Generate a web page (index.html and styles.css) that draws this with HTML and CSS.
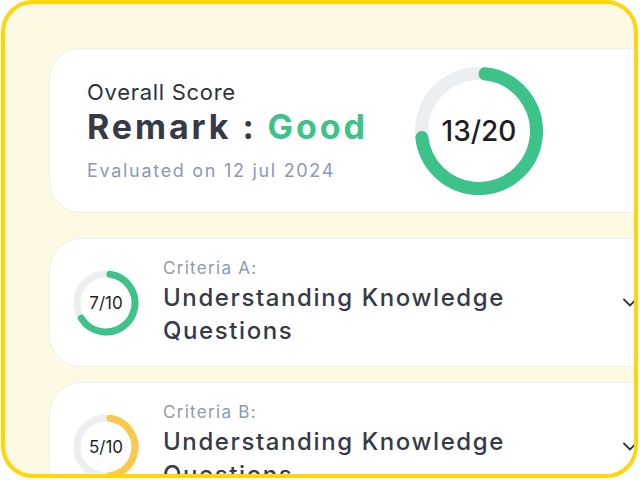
FILE: index.html
```html
<!DOCTYPE html>
<html>
<head>
<meta charset="utf-8">
<link rel="stylesheet" href="styles.css">
</head>
<body>
<div class="frame">
  <section class="card overall">
    <div class="overall-text">
      <div class="overall-label">Overall Score</div>
      <div class="remark">Remark : <span class="good">Good</span></div>
      <div class="evaluated">Evaluated on 12 jul 2024</div>
    </div>
    <div class="ring big-ring">
      <svg width="128" height="128" viewBox="0 0 128 128">
        <circle cx="64" cy="64" r="57.5" fill="none" stroke="#EBEFF2" stroke-width="13"/>
        <circle cx="64" cy="64" r="57.5" fill="none" stroke="#3DC28A" stroke-width="13" stroke-linecap="round" stroke-dasharray="257.9 400" transform="rotate(-84 64 64)"/>
      </svg>
      <span class="ring-value big-value">13/20</span>
    </div>
  </section>

  <div class="criteria-list">
    <section class="card criteria">
      <div class="ring small-ring">
        <svg width="66" height="66" viewBox="0 0 66 66">
          <circle cx="33" cy="33" r="29" fill="none" stroke="#EBEFF2" stroke-width="7"/>
          <circle cx="33" cy="33" r="29" fill="none" stroke="#3DC28A" stroke-width="7" stroke-linecap="round" stroke-dasharray="116.4 300" transform="rotate(-82 33 33)"/>
        </svg>
        <span class="ring-value small-value">7/10</span>
      </div>
      <div class="criteria-text">
        <div class="criteria-label">Criteria A:</div>
        <div class="criteria-title">Understanding Knowledge Questions</div>
      </div>
      <svg class="chevron" width="14" height="9" viewBox="0 0 14 9">
        <path d="M1 1.5 L7 7.5 L13 1.5" fill="none" stroke="#2F323A" stroke-width="1.8" stroke-linecap="round" stroke-linejoin="round"/>
      </svg>
    </section>

    <section class="card criteria">
      <div class="ring small-ring">
        <svg width="66" height="66" viewBox="0 0 66 66">
          <circle cx="33" cy="33" r="29" fill="none" stroke="#EBEFF2" stroke-width="7"/>
          <circle cx="33" cy="33" r="29" fill="none" stroke="#FAC84A" stroke-width="7" stroke-linecap="round" stroke-dasharray="84.5 300" transform="rotate(-82 33 33)"/>
        </svg>
        <span class="ring-value small-value">5/10</span>
      </div>
      <div class="criteria-text">
        <div class="criteria-label">Criteria B:</div>
        <div class="criteria-title">Understanding Knowledge Questions</div>
      </div>
      <svg class="chevron" width="14" height="9" viewBox="0 0 14 9">
        <path d="M1 1.5 L7 7.5 L13 1.5" fill="none" stroke="#2F323A" stroke-width="1.8" stroke-linecap="round" stroke-linejoin="round"/>
      </svg>
    </section>
  </div>
</div>
</body>
</html>
```

FILE: styles.css
```css
* { box-sizing: border-box; }

html, body {
  margin: 0;
  padding: 0;
  background: #ffffff;
}

body {
  font-family: "Inter", "DejaVu Sans", sans-serif;
  color: #363A46;
}

.frame {
  margin-left: 1px;
  width: 637px;
  height: 478px;
  border: 4px solid #FFD60A;
  border-radius: 32px;
  background: #FEF9E3;
  overflow: hidden;
  padding: 44px 0 0 44px;
}

.card {
  width: 640px;
  background: #ffffff;
  border: 1px solid #ECEFF2;
  border-radius: 32px;
}

.overall {
  height: 165px;
  display: grid;
  grid-template-columns: 328px 128px;
  align-items: center;
  padding-left: 37px;
}

.overall-label {
  font-size: 22px;
  line-height: 26px;
  color: #2E3139;
  font-weight: 400;
  letter-spacing: 0.7px;
}

.remark {
  font-size: 34px;
  line-height: 44px;
  font-weight: 700;
  color: #363A46;
  letter-spacing: 2.9px;
  white-space: nowrap;
}

.good { color: #3DC28A; }

.evaluated {
  font-size: 18px;
  line-height: 24px;
  color: #8E98B4;
  margin-top: 10px;
  letter-spacing: 1.7px;
  white-space: nowrap;
}

.ring {
  position: relative;
  display: flex;
  align-items: center;
  justify-content: center;
}

.ring svg { display: block; }

.ring-value {
  position: absolute;
  inset: 0;
  display: flex;
  align-items: center;
  justify-content: center;
  color: #1D1F27;
}

.big-value {
  font-size: 28px;
  font-weight: 500;
}

.small-value {
  font-size: 17px;
  font-weight: 400;
}

.criteria-list {
  margin-top: 25px;
  display: flex;
  flex-direction: column;
  gap: 15px;
}

.criteria {
  height: 129px;
  flex: none;
  display: flex;
  align-items: center;
  padding-left: 23px;
  padding-right: 51px;
}

.small-ring {
  width: 66px;
  height: 66px;
  flex: none;
}

.criteria-text {
  flex: 1;
  margin-left: 24px;
}

.criteria-label {
  font-size: 17px;
  line-height: 20px;
  color: #8E98B4;
  letter-spacing: 1.3px;
}

.criteria-title {
  font-size: 24px;
  line-height: 33px;
  font-weight: 500;
  color: #363A46;
  max-width: 400px;
  margin-top: 3px;
  letter-spacing: 1.6px;
}

.chevron {
  flex: none;
  display: block;
}
```
